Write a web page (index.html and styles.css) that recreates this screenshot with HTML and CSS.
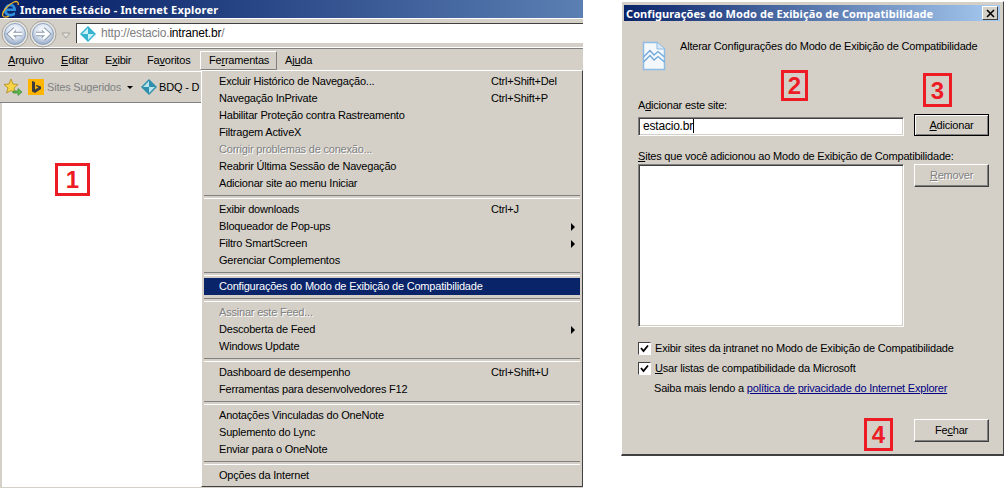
FILE: index.html
```html
<!DOCTYPE html>
<html lang="pt-BR">
<head>
    <meta charset="UTF-8">
    <meta name="viewport" content="width=device-width, initial-scale=1.0">
    <title>Intranet Estácio - Internet Explorer</title>
    <link rel="stylesheet" href="styles.css">
</head>
<body>
    <div class="browser">
        <div class="titlebar">
            <svg class="ie-logo" width="18" height="18" viewBox="0 0 18 18">
                <path d="M3 11 C3 5 9 2 13 5 C15 7 15 9 15 11 L6 11 C6 14 10 15 14 12 L14 15 C9 18 3 16 3 11 Z M6 8.500 L12 8.500 C11.500 5.500 7 5.500 6 8.500 Z" fill="#2f8fdc" fill-rule="evenodd"/>
                <path d="M2 16 C0 13 6 5 13 2 C16 0.800 18 2 17 5 M2 16 C3 17.500 6 17 8 16" fill="none" stroke="#f2b32a" stroke-width="1.300"/>
            </svg>
            <span>Intranet Estácio - Internet Explorer</span>
        </div>
        <div class="addressrow">
            <div class="navbuttons">
                <svg width="72" height="30" viewBox="0 0 72 30">
                    <defs>
                        <radialGradient id="glass" cx="50%" cy="35%" r="60%">
                            <stop offset="0" stop-color="#ffffff"/>
                            <stop offset="0.6" stop-color="#d9e2ef"/>
                            <stop offset="1" stop-color="#9fb2cc"/>
                        </radialGradient>
                    </defs>
                    <circle cx="15" cy="14" r="13" fill="#e8e6e2" stroke="#a5a29b"/>
                    <circle cx="43" cy="14" r="13" fill="#e8e6e2" stroke="#a5a29b"/>
                    <circle cx="15" cy="14" r="10.500" fill="url(#glass)" stroke="#8ea3bf"/>
                    <circle cx="43" cy="14" r="10.500" fill="url(#glass)" stroke="#8ea3bf"/>
                    <path d="M22 14 H10 M15 9 L9.500 14 L15 19" fill="none" stroke="#8a9ab0" stroke-width="4.500"/>
                    <path d="M22 14 H10 M15 9 L9.500 14 L15 19" fill="none" stroke="#fff" stroke-width="2.500"/>
                    <path d="M36 14 H48 M43 9 L48.500 14 L43 19" fill="none" stroke="#8a9ab0" stroke-width="4.500"/>
                    <path d="M36 14 H48 M43 9 L48.500 14 L43 19" fill="none" stroke="#fff" stroke-width="2.500"/>
                    <path d="M62 13 L70 13 L66 18 Z" fill="#e6e4e0" stroke="#a5a29b"/>
                </svg>
            </div>
            <div class="addressbox">
                <svg width="16" height="16" viewBox="0 0 16 16">
                    <path d="M8 0 L16 8 L8 16 L0 8 Z" fill="#35b3cf"/>
                    <path d="M8 2 L8 8 L2 8 Z M8 8 L14 8 L8 14 Z" fill="#c9f0f5"/>
                </svg>
                <span class="url"><span class="dim">http://estacio.</span>intranet.br<span class="dim">/</span></span>
            </div>
        </div>
        <div class="menubar">
            <span class="menubar-item w-arquivo"><u>A</u>rquivo</span>
            <span class="menubar-item w-editar"><u>E</u>ditar</span>
            <span class="menubar-item w-exibir">E<u>x</u>ibir</span>
            <span class="menubar-item w-favoritos">Fa<u>v</u>oritos</span>
            <span class="menubar-item active">Fe<u>r</u>ramentas</span>
            <span class="menubar-item">Aj<u>u</u>da</span>
        </div>
        <div class="favbar">
            <svg width="20" height="18" viewBox="0 0 20 18">
                <path d="M8 1 L10 6 L15 6.500 L11 10 L12.500 15 L8 12.500 L3.500 15 L5 10 L1 6.500 L6 6 Z" fill="#f6d443" stroke="#b08a1e" stroke-width="0.800"/>
                <path d="M10 13 H15 V10.500 L19 14 L15 17.500 V15 H10 Z" fill="#5cb84a" stroke="#2f7d2a" stroke-width="0.600"/>
            </svg>
            <span class="bing">
                <svg width="16" height="16" viewBox="0 0 16 16">
                    <rect width="16" height="16" fill="#ffb400"/>
                    <path d="M4 2 L7 3 V10.500 L10.500 8.500 L8.500 7.500 L7.800 5.800 L13 7.500 V10 L7 14 L4 12.500 Z" fill="#3c3c3c"/>
                </svg>
            </span>
            <span class="fav-gray">Sites Sugeridos</span>
            <span class="fav-caret"></span>
            <svg class="fav-diamond" width="16" height="16" viewBox="0 0 16 16">
                <path d="M8 0 L16 8 L8 16 L0 8 Z" fill="#2f90ad"/>
                <path d="M8 2 L8 8 L2 8 Z M8 8 L14 8 L8 14 Z" fill="#b9e4ee"/>
            </svg>
            <span>BDQ - D</span>
        </div>
        <div class="page"></div>

        <div class="tools-menu">
            <div class="item"><span>Excluir Histórico de Navegação...</span><span class="shortcut">Ctrl+Shift+Del</span></div>
            <div class="item"><span>Navegação InPrivate</span><span class="shortcut">Ctrl+Shift+P</span></div>
            <div class="item"><span>Habilitar Proteção contra Rastreamento</span></div>
            <div class="item"><span>Filtragem ActiveX</span></div>
            <div class="item disabled"><span>Corrigir problemas de conexão...</span></div>
            <div class="item"><span>Reabrir Última Sessão de Navegação</span></div>
            <div class="item"><span>Adicionar site ao menu Iniciar</span></div>
            <div class="sep"></div>
            <div class="item"><span>Exibir downloads</span><span class="shortcut">Ctrl+J</span></div>
            <div class="item"><span>Bloqueador de Pop-ups</span><span class="arrow"></span></div>
            <div class="item"><span>Filtro SmartScreen</span><span class="arrow"></span></div>
            <div class="item"><span>Gerenciar Complementos</span></div>
            <div class="sep"></div>
            <div class="item selected"><span>Configurações do Modo de Exibição de Compatibilidade</span></div>
            <div class="sep"></div>
            <div class="item disabled"><span>Assinar este Feed...</span></div>
            <div class="item"><span>Descoberta de Feed</span><span class="arrow"></span></div>
            <div class="item"><span>Windows Update</span></div>
            <div class="sep"></div>
            <div class="item"><span>Dashboard de desempenho</span><span class="shortcut">Ctrl+Shift+U</span></div>
            <div class="item"><span>Ferramentas para desenvolvedores F12</span></div>
            <div class="sep"></div>
            <div class="item"><span>Anotações Vinculadas do OneNote</span></div>
            <div class="item"><span>Suplemento do Lync</span></div>
            <div class="item"><span>Enviar para o OneNote</span></div>
            <div class="sep"></div>
            <div class="item"><span>Opções da Internet</span></div>
        </div>
    </div>

    <div class="dialog">
        <div class="dialog-title">
            <span>Configurações do Modo de Exibição de Compatibilidade</span>
            <span class="close-btn">
                <svg width="9" height="9" viewBox="0 0 9 9">
                    <path d="M1 1 L8 8 M8 1 L1 8" stroke="#000" stroke-width="1.600"/>
                </svg>
            </span>
        </div>
        <div class="dialog-body">
            <div class="dialog-head">
                <svg width="24" height="30" viewBox="0 0 24 30">
                    <path d="M1.500 1.500 H15 L22.500 8 V28.500 H1.500 Z" fill="#f4f8fc" stroke="#8dbbe2" stroke-width="1.500"/>
                    <path d="M15 1.500 V8 H22.500" fill="#dbe9f6" stroke="#8dbbe2"/>
                    <path d="M1.500 16 L8 9.500 L12 14 L16 10.500 L22.500 16 M1.500 21 L8 14.500 L12 19 L16 15.500 L22.500 21" fill="none" stroke="#6ea6d8" stroke-width="1.300"/>
                </svg>
                <span>Alterar Configurações do Modo de Exibição de Compatibilidade</span>
            </div>
            <label class="field-label first">A<u>d</u>icionar este site:</label>
            <div class="row add-row">
                <div class="sunken input">estacio.br<i class="caret"></i></div>
                <button class="btn default"><u>A</u>dicionar</button>
            </div>
            <label class="field-label second"><u>S</u>ites que você adicionou ao Modo de Exibição de Compatibilidade:</label>
            <div class="row list-row">
                <div class="sunken listbox"></div>
                <button class="btn off"><u>R</u>emover</button>
            </div>
            <div class="check first-check">
                <span class="box"><svg width="9" height="9" viewBox="0 0 9 9"><path d="M1 4 L3.500 7 L8 1.500" fill="none" stroke="#000" stroke-width="1.800"/></svg></span>
                <span>Exibir sites da <u>i</u>ntranet no Modo de Exibição de Compatibilidade</span>
            </div>
            <div class="check">
                <span class="box"><svg width="9" height="9" viewBox="0 0 9 9"><path d="M1 4 L3.500 7 L8 1.500" fill="none" stroke="#000" stroke-width="1.800"/></svg></span>
                <span><u>U</u>sar listas de compatibilidade da Microsoft</span>
            </div>
            <div class="learn">Saiba mais lendo a <a href="#">política de privacidade do Internet Explorer</a></div>
            <div class="dialog-foot">
                <button class="btn">Fe<u>c</u>har</button>
            </div>
        </div>
    </div>

    <!-- numeros vermelhos por cima do print -->
    <div class="mark mark-1">1</div>
    <div class="mark mark-2">2</div>
    <div class="mark mark-3">3</div>
    <div class="mark mark-4">4</div>
</body>
</html>
```

FILE: styles.css
```css
* {
    box-sizing: border-box;
}

body {
    margin: 0;
    width: 1006px;
    height: 488px;
    overflow: hidden;
    background: white;
    display: flex;
    align-items: flex-start;
    position: relative;
    font-family: 'Liberation Sans', 'Noto Sans', sans-serif;
    font-size: 11px;
    line-height: 13px;
    letter-spacing: -0.200px;
    color: #000;
}

u {
    text-decoration: underline;
}

/* janela do navegador */
.browser {
    width: 583px;
    height: 488px;
    position: relative;
    background: #d4d0c8;
    flex-shrink: 0;
}

.titlebar {
    height: 18px;
    display: flex;
    align-items: center;
    gap: 1px;
    padding-left: 1px;
    background: linear-gradient(90deg, #0a246a 0%, #0a246a 10%, #5b7fb3 100%);
    color: white;
    font-family: 'Noto Sans', sans-serif;
    font-weight: bold;
    font-size: 11px;
    letter-spacing: 0.180px;
}

.ie-logo {
    flex-shrink: 0;
}

.addressrow {
    height: 30px;
    display: flex;
    align-items: flex-start;
    background: #d4d0c8;
    border-top: 1px solid #fff;
    border-bottom: 1px solid #fff;
    box-shadow: inset 0 4px 0 #d4d0c8;
}

.navbuttons {
    width: 76px;
    padding: 1px 0 0 0;
    display: flex;
    flex-shrink: 0;
}

.addressbox {
    flex: 1;
    height: 20px;
    margin-top: 4px;
    display: flex;
    align-items: center;
    gap: 5px;
    padding-left: 3px;
    background: white;
    border-top: 1px solid #404040;
    border-left: 1px solid #404040;
    font-size: 12px;
}

.dim {
    color: #808080;
}

.menubar {
    height: 24px;
    display: flex;
    align-items: center;
    padding-left: 3px;
    border-top: 1px solid #808080;
    border-bottom: 1px solid #fff;
}

.menubar-item {
    padding: 0 4px;
    height: 19px;
    line-height: 17px;
    border: 1px solid transparent;
}

.w-arquivo {
    width: 53px;
}

.w-editar {
    width: 44px;
}

.w-exibir {
    width: 42px;
}

.w-favoritos {
    width: 58px;
}

.menubar-item.active {
    width: 77px;
    padding: 0 8px;
    margin-right: 3px;
    border-color: #fff #808080 #808080 #fff;
}

.favbar {
    height: 31px;
    display: flex;
    align-items: center;
    padding-left: 3px;
    border-bottom: 1px solid #808080;
}

.bing {
    display: flex;
    margin-left: 5px;
}

.fav-gray {
    color: #808080;
    margin-left: 3px;
}

.fav-caret {
    width: 0;
    height: 0;
    margin-left: 6px;
    border-left: 3px solid transparent;
    border-right: 3px solid transparent;
    border-top: 3px solid #000;
}

.fav-diamond {
    margin: 0 2px 0 8px;
}

.page {
    height: 384px;
    background: white;
    margin-left: 2px;
}

/* menu Ferramentas */
.tools-menu {
    position: absolute;
    left: 201px;
    top: 70px;
    width: 382px;
    height: 417px;
    padding: 2px 2px 0;
    background: #d4d0c8;
    border-top: 1px solid #fff;
    border-left: 1px solid #fff;
    border-right: 1px solid #404040;
    border-bottom: 1px solid #404040;
}

.item {
    height: 17px;
    display: flex;
    align-items: center;
    position: relative;
    padding-left: 15px;
}

.item.disabled {
    color: #808080;
    text-shadow: 1px 1px 0 #fff;
}

.item.selected {
    background: #0a246a;
    color: white;
}

.shortcut {
    position: absolute;
    left: 287px;
}

.arrow {
    position: absolute;
    right: 5px;
    width: 0;
    height: 0;
    border-top: 4px solid transparent;
    border-bottom: 4px solid transparent;
    border-left: 4px solid #000;
}

.sep {
    height: 9px;
    padding-top: 3px;
}

.sep::before {
    content: "";
    display: block;
    height: 2px;
    border-top: 1px solid #808080;
    border-bottom: 1px solid #fff;
}

/* dialogo */
.dialog {
    width: 383px;
    height: 455px;
    margin-left: 38px;
    margin-top: 1px;
    flex-shrink: 0;
    background: #d4d0c8;
    padding: 3px 3px 0 2px;
    border-top: 1px solid #fff;
    border-left: 1px solid #fff;
    border-right: 1px solid #404040;
    border-bottom: 2px solid #404040;
}

.dialog-title {
    height: 16px;
    display: flex;
    align-items: center;
    justify-content: space-between;
    padding: 0 2px 0 2px;
    background: linear-gradient(90deg, #0a246a, #a6caf0);
    color: white;
    font-family: 'Noto Sans', sans-serif;
    font-weight: bold;
    letter-spacing: 0.080px;
}

.close-btn {
    width: 16px;
    height: 14px;
    display: flex;
    align-items: center;
    justify-content: center;
    background: #d4d0c8;
    border: 1px solid;
    border-color: #fff #404040 #404040 #fff;
}

.dialog-body {
    padding: 20px 11px 0 14px;
}

.dialog-head {
    display: flex;
    align-items: flex-start;
    gap: 14px;
    padding-left: 4px;
    height: 30px;
    white-space: nowrap;
}

.dialog-head span {
    margin-top: -1px;
}

.field-label {
    display: block;
}

.field-label.first {
    margin-top: 28px;
}

.field-label.second {
    margin-top: 14px;
}

.row {
    display: flex;
    justify-content: space-between;
    align-items: flex-start;
    width: 351px;
}

.add-row {
    margin-top: 5px;
}

.list-row {
    margin-top: 1px;
}

.sunken {
    width: 266px;
    background: white;
    border: 1px solid;
    border-color: #808080 #fff #fff #808080;
    box-shadow: inset 1px 1px 0 #404040, inset -1px -1px 0 #d4d0c8;
}

.input {
    height: 19px;
    line-height: 17px;
    padding-left: 4px;
    font-size: 12px;
}

.caret {
    display: inline-block;
    width: 1px;
    height: 14px;
    background: #000;
    vertical-align: -3px;
}

.listbox {
    height: 163px;
}

.btn {
    width: 75px;
    height: 23px;
    padding: 0;
    font: inherit;
    letter-spacing: inherit;
    color: #000;
    background: #d4d0c8;
    border: 1px solid;
    border-color: #fff #404040 #404040 #fff;
    box-shadow: inset -1px -1px 0 #808080;
}

.btn.default {
    height: 22px;
    margin-top: -3px;
    border-color: #000;
    box-shadow: inset 1px 1px 0 #fff, inset -1px -1px 0 #808080;
}

.btn.off {
    color: #808080;
    text-shadow: 1px 1px 0 #fff;
}

.check {
    display: flex;
    align-items: center;
    gap: 4px;
    height: 14px;
    margin-top: 6px;
}

.check.first-check {
    margin-top: 14px;
}

.box {
    width: 13px;
    height: 13px;
    display: flex;
    align-items: center;
    justify-content: center;
    background: white;
    border: 1px solid;
    border-color: #404040 #fff #fff #404040;
}

.learn {
    margin-top: 7px;
    padding-left: 16px;
}

.learn a {
    color: #000080;
}

.dialog-foot {
    display: flex;
    justify-content: flex-end;
    width: 351px;
    margin-top: 24px;
}

/* numeros */
.mark {
    position: absolute;
    display: flex;
    align-items: center;
    justify-content: center;
    border: 3px solid #ed1c24;
    color: #ed1c24;
    font-family: 'Liberation Sans', sans-serif;
    font-weight: bold;
    font-size: 24px;
    letter-spacing: 0;
}

.mark-1 {
    left: 55px;
    top: 163px;
    width: 35px;
    height: 33px;
}

.mark-2 {
    left: 781px;
    top: 70px;
    width: 27px;
    height: 31px;
}

.mark-3 {
    left: 923px;
    top: 73px;
    width: 29px;
    height: 34px;
}

.mark-4 {
    left: 864px;
    top: 418px;
    width: 29px;
    height: 33px;
}
```
